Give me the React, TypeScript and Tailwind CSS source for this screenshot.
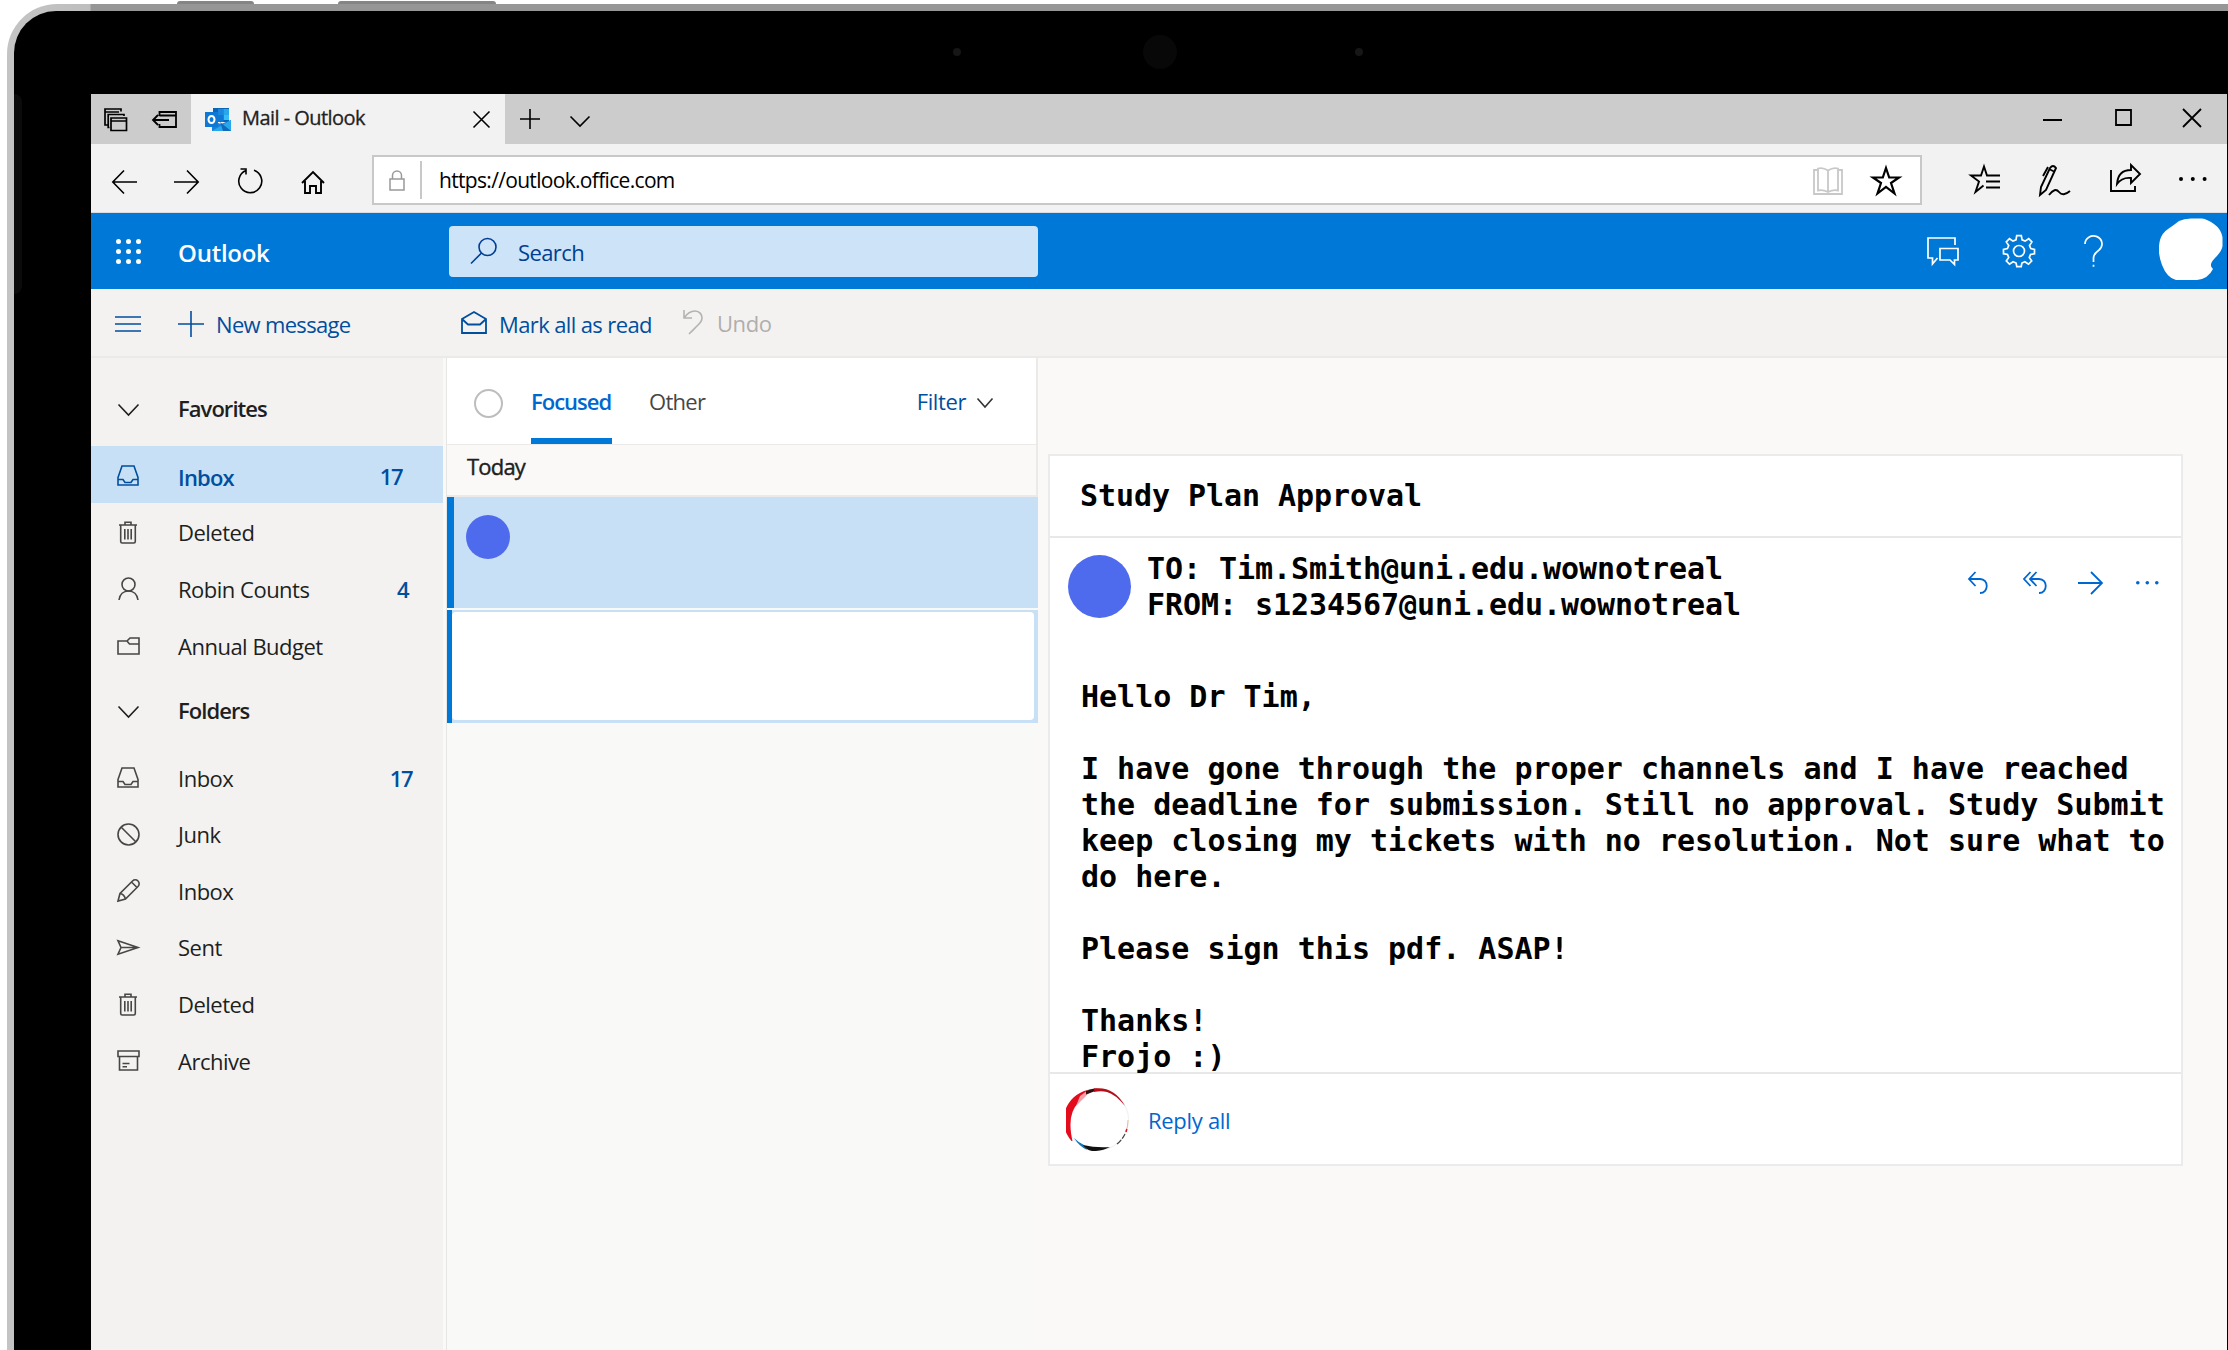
import type { ReactNode } from "react";

type IconProps = { w: number; h: number; className?: string; sw?: number; children: ReactNode };

function Icon({ w, h, className = "", sw = 1.6, children }: IconProps) {
  return (
    <svg
      width={w}
      height={h}
      viewBox={`0 0 ${w} ${h}`}
      fill="none"
      stroke="currentColor"
      strokeWidth={sw}
      className={`shrink-0 overflow-visible ${className}`}
    >
      {children}
    </svg>
  );
}

const InboxIcon = () => (
  <Icon w={22} h={21}>
    <path d="M1 12.500 5 1h12l4 11.500V20H1zM1 14.500h5l2 3h6l2-3h5" />
  </Icon>
);
const TrashIcon = () => (
  <Icon w={22} h={23}>
    <path d="M2 4h18M8 4V1.200h6V4M3.700 4v16.500q0 1.500 1.500 1.500h11.600q1.500 0 1.500-1.500V4M7.800 8v10.500M11 8v10.500M14.200 8v10.500" />
  </Icon>
);
const PersonIcon = () => (
  <Icon w={22} h={23}>
    <circle cx="11.500" cy="7.500" r="6.500" />
    <path d="M2 23c.8-5.500 4.500-9 9.500-9s8.700 3.500 9.500 9" />
  </Icon>
);
const FolderIcon = () => (
  <Icon w={23} h={18}>
    <path d="M1 4h9l3-3h9v16H1zM10 4l2.500 3H22" />
  </Icon>
);
const BlockIcon = () => (
  <Icon w={23} h={23}>
    <circle cx="11.500" cy="11.500" r="10.500" />
    <path d="m4 4 15 15" />
  </Icon>
);
const PencilIcon = () => (
  <Icon w={23} h={23}>
    <path d="M1 22l2-7.500L15.500 2a3.500 3.500 0 0 1 5.500 5.500L8.500 20zM3 14.500q4 .5 5.500 5.500M14.500 3l5.500 5.500" />
  </Icon>
);
const SendIcon = () => (
  <Icon w={23} h={15}>
    <path d="M1 .8 21 7.500 1 14.200l3-6.700zM4 7.500h16" />
  </Icon>
);
const ArchiveIcon = () => (
  <Icon w={23} h={21}>
    <path d="M1 1h21v5.500H1zM2.500 6.500V20h18V6.500M5.500 13.500h7M5.500 16.800h4.500" />
  </Icon>
);

function Chevron({ w, h, className = "" }: { w: number; h: number; className?: string }) {
  return (
    <Icon w={w} h={h} className={className}>
      <path d={`M.5 .5 ${w / 2} ${h - 1} ${w - 0.5} .5`} />
    </Icon>
  );
}

function Dots({ gap, r, className = "" }: { gap: number; r: number; className?: string }) {
  return (
    <svg width={gap * 2 + r * 2} height={r * 2} className={`shrink-0 ${className}`} fill="currentColor">
      {[0, 1, 2].map((i) => (
        <circle key={i} cx={r + i * gap} cy={r} r={r} />
      ))}
    </svg>
  );
}

function OutlookLogo() {
  return (
    <svg width="26" height="23" viewBox="0 0 26 23" className="ml-[14px] shrink-0">
      <path d="M8 0h16v14H8z" fill="#0a64b8" />
      <path d="M13 1h5.500v6H13z" fill="#1a86dc" />
      <path d="M18.500 1H24v6h-5.500z" fill="#28a8ea" />
      <path d="M18.500 7H24v5h-5.500z" fill="#35bdf5" />
      <path d="M13 7h5.500v7H13z" fill="#0f78d4" />
      <path d="m7 13 9 3 10-4v11H7z" fill="#1583dc" />
      <path d="M7 23 26 12v11z" fill="#28a8ea" />
      <path d="m15 14 11 9h-8z" fill="#1268bd" />
      <rect y="4" width="13" height="15" fill="#0f78d4" />
      <ellipse cx="6.500" cy="11.500" rx="3" ry="3.600" fill="none" stroke="#fff" strokeWidth="2" />
    </svg>
  );
}

function TabStrip() {
  return (
    <div className="flex h-[50px] items-center bg-[#cccccc] text-black">
      <Icon w={23} h={23} className="ml-[13px]" sw={1.700}>
        <path d="M4 17H1V1h16v2.500M1 4h14M5.500 19.500H4.200V6.500H20V8M7 10h15.500v12.500H7zM7 13h15.500" />
      </Icon>
      <Icon w={25} h={17} className="ml-[25px]" sw={1.800}>
        <path d="M7.500 5V1H24v15H7.500v-3M7.500 4.500H24M17 9H1M6 4 1 9l5 5" />
      </Icon>
      <div className="ml-[14px] flex h-full w-[314px] items-center bg-[#f2f2f2]">
        <OutlookLogo />
        <span className="ml-[11px] pb-[3px] text-[20px] leading-6 tracking-[-0.550px] text-[#222] [-webkit-text-stroke:0.3px]">Mail - Outlook</span>
        <Icon w={17} h={17} className="mr-[15px] ml-auto">
          <path d="m.5.5 16 16m0-16-16 16" />
        </Icon>
      </div>
      <Icon w={20} h={20} className="ml-[15px]">
        <path d="M10 0v20M0 10h20" />
      </Icon>
      <Chevron w={20} h={11} className="mt-[4px] ml-[30px]" />
      <Icon w={19} h={19} className="ml-auto" sw={2}>
        <path d="M0 10h19" />
      </Icon>
      <Icon w={17} h={17} className="mr-[51px] mb-[3px] ml-[53px]" sw={1.800}>
        <path d="M1 1h15v15H1z" />
      </Icon>
      <Icon w={18} h={18} className="mr-[26px] mb-[3px]" sw={1.800}>
        <path d="m0 0 18 18M18 0 0 18" />
      </Icon>
    </div>
  );
}

function AddressBar() {
  return (
    <div className="flex h-[69px] items-center border-b border-[#d8dde4] bg-[#f2f2f2] text-black">
      <Icon w={25} h={24} className="mt-[8px] ml-[21px]">
        <path d="M25 12H1M12 .5.800 12 12 23.500" />
      </Icon>
      <Icon w={25} h={24} className="mt-[8px] ml-[37px]">
        <path d="M0 12h24M13 .5 24.200 12 13 23.500" />
      </Icon>
      <Icon w={25} h={26} className="mt-[6px] ml-[38px]">
        <path d="M9 2.500a11.500 11.500 0 1 0 8-.2M3.500 1H9v5.500" />
      </Icon>
      <Icon w={24} h={23} className="mt-[8px] ml-[39px]" sw={1.900}>
        <path d="M1 12 12 1l11 11M4 10v12h5v-7h6v7h5V10" />
      </Icon>
      <div className="mt-[4px] ml-[47px] flex h-[50px] w-[1550px] items-center border-2 border-[#c8c8c8] bg-white">
        <Icon w={16} h={21} className="ml-[15px] text-[#999]" sw={1.500}>
          <path d="M1 9h14v11H1zM3.500 9V5.500a4.500 4.500 0 0 1 9 0V9" />
        </Icon>
        <div className="ml-[15px] h-[38px] w-[2px] bg-[#c8c8c8]" />
        <span className="ml-[17px] text-[21px] leading-6 tracking-[-0.680px]">https://outlook.office.com</span>
        <Icon w={30} h={28} className="mt-[2px] ml-auto text-[#c8c8c8]" sw={1.800}>
          <path d="M5 3H1v24h28V3h-4M15 3.500Q10 0 5 1.500v22q5-1 10 1.500 5-2.500 10-1.500v-22Q20 0 15 3.500zM15 3.500V25" />
        </Icon>
        <Icon w={30} h={31} className="mr-[19px] ml-[28px]" sw={2.200}>
          <path d="m15 3 3.200 9.500H28L20 18l3.500 10.500L15 22l-8.500 6.500L10 18l-8-5.500h9.800z" />
        </Icon>
      </div>
      <Icon w={31} h={30} className="mt-[2px] ml-[47px]" sw={1.900}>
        <path d="M31 11.500H18L15 2.500l-3 9H2l8 6L6.500 28l8-6.500M31 17.500H17M31 23.500H17" />
      </Icon>
      <Icon w={31} h={31} className="mt-[4px] ml-[39px]" sw={1.900}>
        <path d="M1 30 2 22 11 3q3-4 6 0L7 25zM4 11l5-9M10 4l6 3M10 30q6-8 10-3t11-1" />
      </Icon>
      <Icon w={31} h={28} className="mb-[1px] ml-[40px]" sw={1.900}>
        <path d="M1 6v21h24v-5M7 20Q8 6 21 6V1l9 9-9 9v-5Q12 13 7 20z" />
      </Icon>
      <Dots gap={11.800} r={2} className="mt-[2px] ml-[38px]" />
    </div>
  );
}

function SuiteHeader() {
  return (
    <div className="flex h-[76px] items-center bg-[#0078d7] text-white">
      <div className="ml-[25px] grid grid-cols-3 gap-[5px]">
        {Array.from({ length: 9 }, (_, i) => (
          <span key={i} className="size-[5px] rounded-full bg-white" />
        ))}
      </div>
      <span className="ml-[37px] w-[271px] pt-1 text-[24px] leading-8 font-semibold tracking-[-0.250px]">Outlook</span>
      <div className="flex h-[51px] w-[589px] items-center rounded bg-[#cde3f7] text-[#003e92]">
        <Icon w={25} h={26} className="ml-[22px]">
          <circle cx="16.500" cy="9" r="8.500" />
          <path d="M10.500 15 0 25.500" />
        </Icon>
        <span className="ml-[22px] pt-[2px] text-[22px] leading-7 tracking-[-0.600px]">Search</span>
      </div>
      <Icon w={32} h={29} className="ml-auto" sw={1.700}>
        <path d="M28 8V1H1v20h4.500v6l5-6M13 11.500h18V23h-3.500v4.500L23 23H13z" />
      </Icon>
      <Icon w={32} h={32} className="ml-[44px]" sw={1.700}>
        <circle cx="16" cy="16" r="5.500" />
        <path d="M13.700 1h4.600l.8 4.200 3 1.200L25.700 4l3.200 3.200-2.400 3.600 1.300 3 3.700.9v4.300l-4 .8-1.200 3 2.400 3.500-3.200 3.200-3.600-2.400-3 1.200-.7 3.700h-4.400l-.7-3.700-3-1.200-3.600 2.400-3.200-3.200 2.400-3.500-1.200-3-4-.8v-4.300l3.900-.9 1.300-3L3.300 7.200 6.500 4l3.500 2.400 3-1.200z" transform="translate(0 -.3)" />
      </Icon>
      <Icon w={19} h={32} className="ml-[49px]" sw={1.700}>
        <path d="M1 9a8.500 8 0 1 1 14 6q-5.500 4-5.500 8v4M9.500 29.800v2" />
      </Icon>
      <svg width="64" height="62" className="mr-[4px] mb-[4px] ml-[56px]" fill="#fff">
        <path d="M20 3Q25 .5 32 .5H43Q48 1 55 6T63.500 19V28Q63 33 56 40T54 51Q49 61 38 62H17Q8 60 3 47T1 22Q3 15 9 11T20 3z" />
      </svg>
    </div>
  );
}

function CommandBar() {
  return (
    <div className="flex h-[69px] items-center border-b-2 border-[#ebeae9] bg-[#f3f2f1] text-[22px] leading-7 text-[#004e9e]">
      <Icon w={26} h={16} className="mt-[3px] ml-[24px]">
        <path d="M0 1h26M0 8h26M0 15h26" />
      </Icon>
      <Icon w={26} h={26} className="mt-[2px] ml-[37px]">
        <path d="M13 0v26M0 13h26" />
      </Icon>
      <span className="ml-[12px] w-[245px] pt-[3px] tracking-[-0.680px]">New message</span>
      <Icon w={26} h={23} sw={1.800}>
        <path d="M1 8v14h24V8L13 1zM1 8l6 5.500h12L25 8" />
      </Icon>
      <span className="ml-[12px] w-[184px] pt-[3px] tracking-[-0.620px]">Mark all as read</span>
      <Icon w={20} h={25} className="text-[#b5b3b1]">
        <path d="M1 0v8h8M1 8C5 2 9 1 12 1c5 0 7 4 7 7 0 4-3 6-13 16" />
      </Icon>
      <span className="ml-[14px] pt-[1px] tracking-[-0.450px] text-[#b0aeac]">Undo</span>
    </div>
  );
}

type Folder = { icon: () => ReactNode; label: string; count?: string; pad?: string; active?: boolean };

const favorites: Folder[] = [
  { icon: InboxIcon, label: "Inbox", count: "17", pad: "mr-[41px]", active: true },
  { icon: TrashIcon, label: "Deleted" },
  { icon: PersonIcon, label: "Robin Counts", count: "4", pad: "mr-[35px]" },
  { icon: FolderIcon, label: "Annual Budget" },
];
const folders: Folder[] = [
  { icon: InboxIcon, label: "Inbox", count: "17", pad: "mr-[31px]" },
  { icon: BlockIcon, label: "Junk" },
  { icon: PencilIcon, label: "Inbox" },
  { icon: SendIcon, label: "Sent" },
  { icon: TrashIcon, label: "Deleted" },
  { icon: ArchiveIcon, label: "Archive" },
];

function FolderRow({ icon: Glyph, label, count, pad = "", active }: Folder) {
  return (
    <div className={`flex h-[56.6px] items-center pt-[3px] ${active ? "bg-[#c7e0f5] text-[#004e9e]" : "text-[#201f1e]"}`}>
      <span className={`ml-[26px] flex w-[61px] ${active ? "" : "text-[#484644]"}`}>
        <Glyph />
      </span>
      <span className={active ? "pt-[2px] font-semibold tracking-[-0.8px]" : "tracking-[-0.5px]"}>{label}</span>
      {count && <span className={`ml-auto font-semibold tracking-[-1.500px] text-[#004e9e] ${pad}`}>{count}</span>}
    </div>
  );
}

function SectionHeader({ label, className }: { label: string; className: string }) {
  return (
    <div className={`flex items-center font-semibold tracking-[-0.950px] text-[#201f1e] ${className}`}>
      <Chevron w={21} h={12} className="mt-[4px] mr-[39px] ml-[27px]" />
      {label}
    </div>
  );
}

function Sidebar() {
  return (
    <nav className="w-[352px] bg-[#f3f2f1] text-[22px] leading-7">
      <SectionHeader label="Favorites" className="h-[88px] pt-[11px]" />
      {favorites.map((f, i) => (
        <FolderRow key={i} {...f} />
      ))}
      <SectionHeader label="Folders" className="h-[75.500px]" />
      {folders.map((f, i) => (
        <FolderRow key={i} {...f} />
      ))}
    </nav>
  );
}

function MessageList() {
  return (
    <section className="ml-[3px] w-[592px] border-l border-[#e6e6e5] text-[22px] leading-7">
      <div className="flex h-[86px] border-r-2 border-[#ebeae9] bg-white">
        <span className="mt-[31px] ml-[27px] size-[29px] rounded-full border-2 border-[#bdbdbd]" />
        <div className="ml-[28px] w-[81px] border-b-[6px] border-[#0078d7] pt-[29px] font-semibold tracking-[-1px] text-[#0067d0]">Focused</div>
        <span className="mt-[29px] ml-[37px] tracking-[-0.7px] text-[#484644]">Other</span>
        <span className="mt-[29px] ml-auto tracking-[-0.4px] text-[#004e9e]">Filter</span>
        <Chevron w={16} h={10} className="mt-[40px] mr-[43px] ml-[11px] text-[#333]" />
      </div>
      <div className="h-[53px] border-t border-r-2 border-b-2 border-[#ebeae9] bg-[#faf9f8] pt-[7px] pl-[20px] tracking-[-0.8px] text-[#201f1e] [-webkit-text-stroke:0.4px]">Today</div>
      <div className="flex h-[111px] border-l-[7px] border-[#0078d7] bg-[#c7e0f5]">
        <span className="mt-[18px] ml-[12px] size-[44px] rounded-full bg-[#4f6bed]" />
      </div>
      <div className="mt-[2px] h-[113px] border-l-[5px] border-[#0078d7] bg-[#c7e0f5] pt-[2px] pr-[4px] pb-[3px]">
        <div className="h-full rounded bg-white" />
      </div>
    </section>
  );
}

const messageBody = `Hello Dr Tim,

I have gone through the proper channels and I have reached
the deadline for submission. Still no approval. Study Submit
keep closing my tickets with no resolution. Not sure what to
do here.

Please sign this pdf. ASAP!

Thanks!
Frojo :)`;

function ReadingPane() {
  return (
    <main className="flex-1 bg-[#faf9f8] pt-[96px] pl-[10px]">
      <article className="w-[1135px] border-2 border-[#ebebeb] bg-white font-['DejaVu_Sans_Mono',monospace] text-[30px] leading-9 font-bold text-black">
        <h1 className="h-[82px] border-b-2 border-[#e8e8e8] pt-[22px] pl-[30px] tracking-[-0.060px]">Study Plan Approval</h1>
        <div className="flex h-[141px] pt-[13px]">
          <span className="mt-[4px] ml-[18px] size-[63px] shrink-0 rounded-full bg-[#4f6bed]" />
          <div className="ml-[16px] tracking-[-0.060px] whitespace-nowrap">
            <p>TO: Tim.Smith@uni.edu.wownotreal</p>
            <p>FROM: s1234567@uni.edu.wownotreal</p>
          </div>
          <div className="mt-[20px] mr-[22px] ml-auto flex h-6 items-center text-[#0067d0]">
            <Icon w={20} h={22} sw={1.800}>
              <path d="M7.500 0 1 7l6.500 7M1 7h11c9 0 9 14 0 14" />
            </Icon>
            <Icon w={24} h={22} className="ml-[35px]" sw={1.800}>
              <path d="M7.500 0 1 7l6.500 7M13.500 0 7 7l6.500 7M7 7h9c9 0 9 14 0 14" />
            </Icon>
            <Icon w={25} h={22} className="ml-[31px]" sw={1.800}>
              <path d="M0 11h24M13 0l11 11-11 11" />
            </Icon>
            <Dots gap={9.500} r={1.800} className="ml-[33px]" />
          </div>
        </div>
        <pre className="h-[395px] border-b-2 border-[#e8e8e8] pl-[31px] font-[inherit]">{messageBody}</pre>
        <div className="flex h-[90px] items-center font-['Open_Sans',sans-serif] text-[22px] leading-7 font-normal">
          <svg width="63" height="63" viewBox="0 0 63 63" className="ml-[16px]" fill="none">
            <circle cx="31.500" cy="31.500" r="31" stroke="#eef0f0" />
            <path d="M5.500 53A31 31 0 0 1 22 2Q27 0 32 .5 20 5 13 14 4 23 4.500 38q0 6 2 15z" fill="#e30b1c" />
            <path d="M14 8 22 2l4-1-7 8-9 9z" fill="#f3a0a6" />
            <path d="M20 3q4-2 9-2.500l-1 3-8 3z" fill="#2b1113" />
            <path d="M28 .5Q48-2 59 18 49 6 41 4q-6-1.500-13 0z" fill="#b50d1a" />
            <path d="M60 44q2-6 2-12" stroke="#f0b6a8" />
            <path d="M60 44l.8-3" stroke="#e30b1c" strokeWidth="1.500" />
            <path d="M8 50q5 8 13 12l-3-5q-6-3-10-7z" fill="#1173b8" />
            <path d="M17 57q13 3 27 2-8 4.500-18 4-6-1-9-6z" fill="#111" />
            <path d="M51 56q5-4 8-10" stroke="#444" strokeWidth="1.200" strokeDasharray="6 1.500" />
          </svg>
          <span className="ml-[19px] pt-[1px] tracking-[-0.300px] text-[#0067d0]">Reply all</span>
        </div>
      </article>
    </main>
  );
}

export default function App() {
  return (
    <div className="flex h-[1350px] w-[2228px] flex-col overflow-hidden bg-white pl-[7px] font-['Open_Sans','Noto_Sans',sans-serif]">
      {/* Power and volume buttons on the top edge */}
      <div className="flex h-1 pt-px">
        <span className="ml-[170px] w-[77px] rounded-t bg-[#858585]" />
        <span className="ml-[84px] w-[158px] rounded-t bg-[#858585]" />
      </div>
      <div className="flex-1 rounded-tl-[50px] bg-[linear-gradient(90deg,#c4c4c4_0,#bebebe_83px,#969696_84px)] pt-[7px] pl-[7px]">
        <div className="flex h-full flex-col rounded-tl-[42px] bg-black">
          <div className="flex h-[83px] items-center pb-[1px]">
            <span className="ml-[939px] size-2 rounded-full bg-[#161616]" />
            <span className="mr-[178px] ml-[182px] size-[34px] rounded-full bg-[#080808]" />
            <span className="size-2 rounded-full bg-[#161616]" />
          </div>
          <div className="flex flex-1">
            <div className="w-[77px]">
              <div className="h-[200px] w-[8px] rounded-r-lg bg-[#0b0b0b]" />
            </div>
            <div className="flex w-[2136px] flex-col">
              <TabStrip />
              <AddressBar />
              <SuiteHeader />
              <CommandBar />
              <div className="flex flex-1 bg-[#f9f9f8]">
                <Sidebar />
                <MessageList />
                <ReadingPane />
              </div>
            </div>
          </div>
        </div>
      </div>
    </div>
  );
}
